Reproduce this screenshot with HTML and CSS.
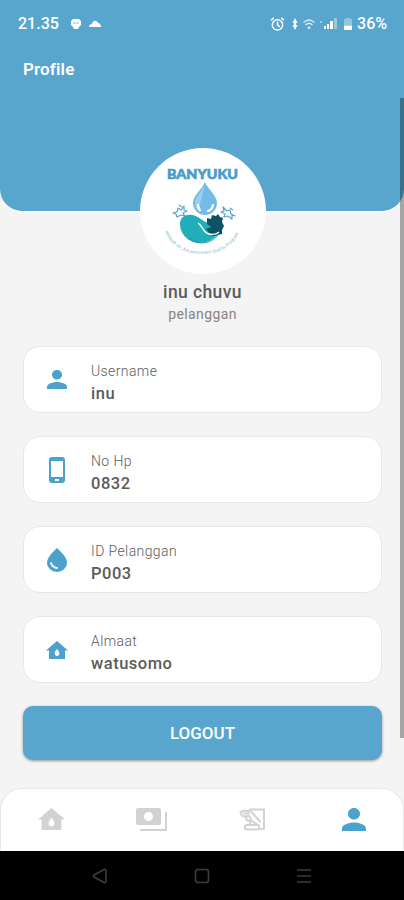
FILE: index.html
```html
<!DOCTYPE html>
<html lang="id">
<head>
  <meta charset="UTF-8" />
  <meta name="viewport" content="width=device-width, initial-scale=1" />
  <title>Banyuku - Profile</title>
  <link rel="stylesheet" href="styles.css">
</head>
<body>
  <!-- simbol yang dipakai lebih dari sekali -->
  <svg class="symbols" aria-hidden="true">
    <symbol id="person" viewBox="4 4 16 16" preserveAspectRatio="none">
      <path d="M12 12c2.200 0 4-1.800 4-4s-1.800-4-4-4-4 1.800-4 4 1.800 4 4 4zm0 2c-2.700 0-8 1.300-8 4v2h16v-2c0-2.700-5.300-4-8-4z"/>
    </symbol>
    <symbol id="home-water" viewBox="1 3 22 18">
      <path fill-rule="evenodd" d="M12 3 1 12.500h3V21h16v-8.500h3L12 3zm0 8s2.400 2.800 2.400 4.600a2.400 2.400 0 0 1-4.800 0C9.600 13.800 12 11 12 11z"/>
    </symbol>
  </svg>

  <header class="header">
    <div class="status-bar">
      <span class="clock">21.35</span>
      <svg class="status-chat" width="12" height="12" viewBox="0 0 12 12">
        <path fill="#fff" d="M3 1h6l2 2v4L9 9 8 11H4L3 9 1 7V3z"/>
        <path stroke="#8fc1dc" fill="none" d="M3 5.500l2-1 1 1 3-1"/>
      </svg>
      <svg class="status-cloud" width="12" height="8" viewBox="0 0 12 8">
        <path fill="#fff" d="M0 7c0-2 1.500-3 3-3 .5-4 5-4 6-1 2 0 3 2 3 4z"/>
      </svg>
      <div class="status-right">
        <svg width="15" height="16" viewBox="0 0 16 16" fill="none" stroke="#fff" stroke-width="1.600">
          <circle cx="8" cy="9" r="5.500"/>
          <path d="M8 5.500V9l2.500 2M1 4l3-2.500M15 4l-3-2.500"/>
        </svg>
        <svg class="status-data" width="6" height="12" viewBox="0 0 6 12" fill="#fff">
          <path d="M3 0l2.500 5h-5zM3 12L.5 7h5zM2 4h2v4H2z"/>
        </svg>
        <svg class="status-wifi" width="12" height="12" viewBox="0 0 12 12" fill="none" stroke="#d8eaf4" stroke-width="1.200">
          <path d="M.5 4.500Q6-.5 11.500 4.500M2.500 7Q6 3.500 9.500 7"/>
          <circle cx="6" cy="9.800" r=".8"/>
        </svg>
        <svg class="status-signal" width="17" height="12" viewBox="0 0 17 12" fill="#fff">
          <path opacity=".4" d="M0 3h2v2H0zM14 0h3v11h-3z"/>
          <path d="M4 8h2v3H4zM7 6h2v5H7zM10 3h3v8h-3z"/>
        </svg>
        <svg class="status-battery" width="8" height="12" viewBox="0 0 8 12" fill="#fff">
          <path opacity=".35" d="M2 0h4v1h2v6H0V1h2z"/>
          <path d="M0 7.500h8V12H0z"/>
        </svg>
        <span class="battery">36%</span>
      </div>
    </div>
    <h1>Profile</h1>
  </header>

  <main class="profile">
    <div class="avatar">
      <svg width="126" height="126" viewBox="0 0 126 126">
        <text class="logo-name" x="27" y="31" textLength="71" lengthAdjust="spacingAndGlyphs">BANYUKU</text>
        <path fill="#73bbe9" d="M65 34c3 8 12 13 12 21a12 12 0 0 1-24 0c0-8 9-13 12-21z"/>
        <path fill="#98cff2" d="M64 37c-2 7-9 12-9 18 0 5 2 8 5 9-2-9 4-16 4-27z"/>
        <path fill="none" stroke="#fff" stroke-width="2.200" stroke-linecap="round" d="M73 57q-1 5-5 6M58 57q0 3 2 5"/>
        <path fill="#21aeb9" d="M40 76c0-7 6-10 12-9 7 1 10 6 16 8 3 3 4 8 10 11-5 6-12 9-19 9-10 0-19-9-19-19z"/>
        <path fill="#0c5366" d="M67 76v-6l4 1 1-4 4 1 2-2 2 3 3 1-1 4 2 4-2 4v4l-4 1-3 1c-5 0-6-4-9-7l5-2z"/>
        <path fill="none" stroke="#fff" stroke-width="1.400" d="M58 75c5 3 5 10 11 11 5 1 8 0 10-2"/>
        <path fill="none" stroke="#159aa8" d="M49 90c9 8 22 6 30-4"/>
        <g fill="none" stroke="#55a4ce" stroke-width="1.200" stroke-linejoin="round">
          <path d="M33 65l4-1 1-4 3 2 3-4v4l3 1-4 2 2 3-4-1-4 2-1-3zM39 57l3 2"/>
          <path d="M95 68l-4-2-1-4-3 1-4-4 1 4-3 1 4 2-1 3 4-1 4 3v-4zM93 62l-3-2"/>
        </g>
        <path id="arc" fill="none" d="M25 84Q36 106 62 106Q90 106 100 82"/>
        <text class="logo-tagline"><textPath href="#arc" textLength="90">Hidayat Air, Advancement Quality Program</textPath></text>
      </svg>
    </div>
    <h2>inu chuvu</h2>
    <p class="role">pelanggan</p>

    <section class="cards">
      <div class="card">
        <div class="card-icon"><svg width="20" height="19"><use href="#person"/></svg></div>
        <div>
          <div class="label">Username</div>
          <div class="value">inu</div>
        </div>
      </div>
      <div class="card">
        <div class="card-icon">
          <svg width="16" height="26" viewBox="0 0 16 26">
            <path fill-rule="evenodd" d="M3 0h10q3 0 3 3v20q0 3-3 3H3q-3 0-3-3V3q0-3 3-3zM2 4v16h12V4zM6 22v2h4v-2z"/>
          </svg>
        </div>
        <div>
          <div class="label">No Hp</div>
          <div class="value">0832</div>
        </div>
      </div>
      <div class="card">
        <div class="card-icon">
          <svg width="20" height="24" viewBox="0 0 20 24">
            <path d="M10 0c4 4 10 9 10 15a10 9 0 0 1-20 0C0 9 6 4 10 0z"/>
            <path fill="none" stroke="#fff" stroke-width="1.800" stroke-linecap="round" d="M4 15q1 4 6 5"/>
          </svg>
        </div>
        <div>
          <div class="label">ID Pelanggan</div>
          <div class="value">P003</div>
        </div>
      </div>
      <div class="card">
        <div class="card-icon"><svg width="22" height="20"><use href="#home-water"/></svg></div>
        <div>
          <div class="label">Almaat</div>
          <div class="value">watusomo</div>
        </div>
      </div>
    </section>

    <button type="button" class="logout">LOGOUT</button>
  </main>

  <nav class="tabs">
    <a><svg width="27" height="24"><use href="#home-water"/></svg></a>
    <a>
      <svg width="31" height="23" viewBox="0 0 31 23">
        <path fill-rule="evenodd" d="M2 0h21q2 0 2 2v13q0 2-2 2H2q-2 0-2-2V2q0-2 2-2zM12.500 4a4.500 4.500 0 1 0 0 9 4.500 4.500 0 0 0 0-9z"/>
        <path fill="none" stroke="currentColor" stroke-width="2" d="M30 4v18H4"/>
      </svg>
    </a>
    <a>
      <svg class="hand" width="27" height="23" viewBox="0 0 27 23" fill="none" stroke="currentColor" stroke-width="2" stroke-linejoin="round" stroke-linecap="round">
        <path d="M11 1.500h14V21h-4"/>
        <path d="M1.500 4L6 2.500l6 1 9 10M1.500 4Q2 8 5 8.500l5-.5 3 5 6 4M5 5.500h5M7 9q0 4 4 4v4"/>
        <rect x="6" y="17" width="14" height="4.500" rx="1.500"/>
      </svg>
    </a>
    <a class="active"><svg width="24" height="23"><use href="#person"/></svg></a>
  </nav>

  <footer class="system-nav">
    <svg width="16" height="16" viewBox="0 0 16 16"><path d="M12 1.500q2-.5 2 1v11q0 1.500-2 1L2 9Q1 8 2 7z"/></svg>
    <svg width="16" height="16" viewBox="0 0 16 16"><rect x="1.500" y="1.500" width="13" height="13" rx="2.500"/></svg>
    <svg width="16" height="16" viewBox="0 0 16 16"><path d="M1 2h14M1 8h14M1 14h14"/></svg>
  </footer>

  <div class="scrollbar"></div>
</body>
</html>
```
FILE: styles.css
```css
* {
  box-sizing: border-box;
}
body {
  margin: 0;
  height: 900px;
  display: flex;
  flex-direction: column;
  position: relative;
  overflow: hidden;
  background-color: #f4f4f4;
  font-family: Roboto, sans-serif;
  color: #5b5b5b;
}
svg {
  display: block;
  flex: none;
}
.symbols {
  position: absolute;
  width: 0;
  height: 0;
}
.header {
  height: 211px;
  flex: none;
  background-color: #58a6cd;
  border-radius: 0 0 22px 22px;
  box-shadow: 0 1px 1px white;
  color: white;
}
.status-bar {
  display: flex;
  align-items: center;
  height: 47px;
  padding: 0 17px 0 18px;
}
.clock, .battery {
  font-size: 16px;
  font-weight: 500;
}
.status-chat {
  margin-left: 11px;
}
.status-cloud {
  margin-left: 7px;
}
.status-right {
  display: flex;
  align-items: center;
  margin-left: auto;
}
.status-data {
  margin-left: 7px;
}
.status-wifi {
  margin-left: 5px;
}
.status-signal {
  margin-left: 5px;
}
.status-battery {
  margin: 0 5px 0 7px;
}
h1 {
  margin: 11px 0 0 23px;
  font-size: 17px;
  line-height: 22px;
  font-weight: 600;
  letter-spacing: 0.15px;
}
.profile {
  display: flex;
  flex-direction: column;
  align-items: center;
  margin-top: -63px;
  padding: 0 22px 0 23px;
}
.avatar {
  width: 126px;
  height: 126px;
  border-radius: 50%;
  background-color: white;
}
.logo-name {
  font-family: Lato, sans-serif;
  font-size: 13px;
  font-weight: 900;
  fill: #499cc9;
  stroke: #499cc9;
  stroke-width: 0.6;
}
.logo-tagline {
  font-size: 4.500px;
  fill: #83bdc7;
}
h2 {
  margin: 7px 0 0;
  font-size: 17.500px;
  line-height: 22px;
  font-weight: 500;
  letter-spacing: 0.4px;
}
.role {
  margin: 1px 0 0;
  font-size: 14px;
  line-height: 20px;
  letter-spacing: 0.4px;
  color: #858585;
}
.cards {
  width: 100%;
  margin-top: 22px;
  display: grid;
  gap: 23px;
}
.card {
  height: 67px;
  display: flex;
  align-items: center;
  padding-top: 7px;
  border: 1px solid #e7e7e7;
  border-radius: 17px;
  background-color: white;
}
.card-icon {
  width: 67px;
  margin-top: -7px;
  padding-right: 2px;
  display: flex;
  justify-content: center;
  color: #4ba2cc;
  fill: currentColor;
}
.label {
  font-size: 14px;
  line-height: 20px;
  font-weight: 300;
  letter-spacing: 0.4px;
}
.value {
  font-size: 16.500px;
  line-height: 25px;
  font-weight: 500;
  letter-spacing: 0.5px;
}
.logout {
  width: 100%;
  height: 54px;
  margin-top: 23px;
  border: none;
  border-radius: 10px;
  background-color: #58a6cd;
  box-shadow: 0 1px 3px rgba(0,0,0,0.4);
  color: white;
  font-family: inherit;
  font-size: 17px;
  font-weight: 500;
}
.tabs {
  height: 63px;
  flex: none;
  margin-top: auto;
  padding: 0 0 2px;
  display: grid;
  grid-template-columns: repeat(4, 1fr);
  background-color: white;
  border: 1px solid #e8e8e8;
  border-bottom: none;
  border-radius: 22px 22px 0 0;
}
.tabs a {
  display: flex;
  align-items: center;
  justify-content: center;
  color: #d2d2d2;
  fill: currentColor;
}
.tabs .active {
  color: #4ba2cc;
  padding-left: 2px;
}
.tabs .hand {
  fill: none;
}
.system-nav {
  height: 49px;
  flex: none;
  display: flex;
  justify-content: center;
  align-items: center;
  gap: 86px;
  background-color: black;
  fill: none;
  stroke: #3c3c3c;
  stroke-width: 1.600;
}
.scrollbar {
  position: absolute;
  top: 98px;
  right: 0;
  width: 4px;
  height: 640px;
  background-color: rgba(0,0,0,0.32);
}
```
